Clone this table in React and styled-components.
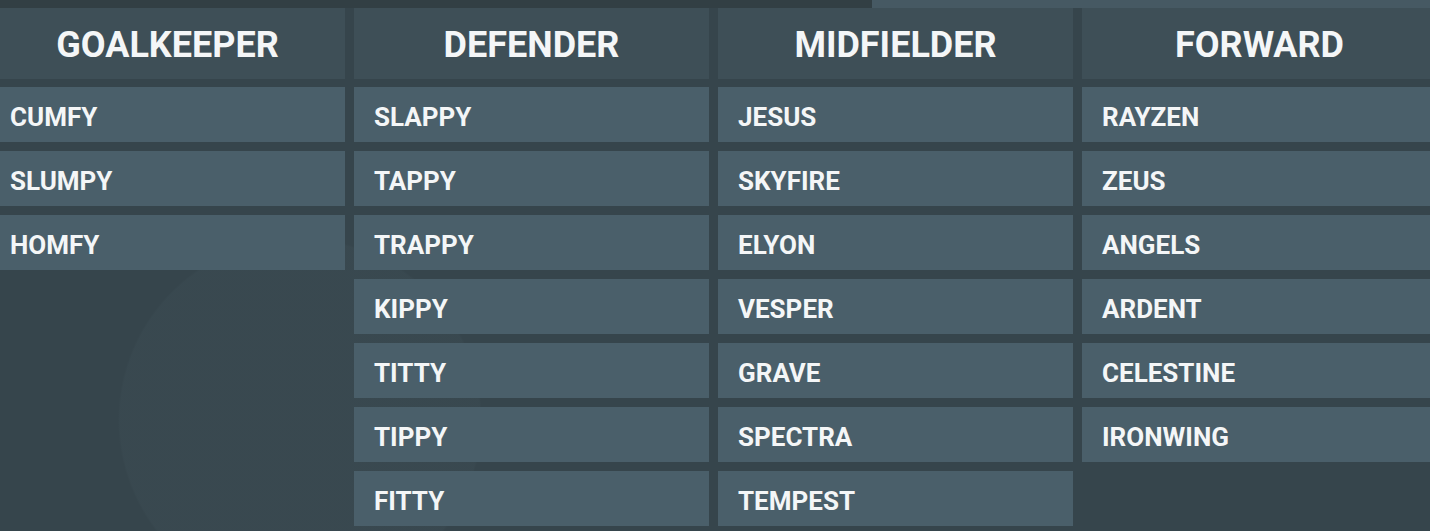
import styled, { createGlobalStyle } from "styled-components";

const GlobalStyle = createGlobalStyle`
  body {
    margin: 0;
    background: #36454c;
    font-family: Roboto, "Liberation Sans", sans-serif;
    overflow: hidden;
  }
`;

const positions = [
  { title: "GOALKEEPER", players: ["CUMFY", "SLUMPY", "HOMFY"] },
  { title: "DEFENDER", players: ["SLAPPY", "TAPPY", "TRAPPY", "KIPPY", "TITTY", "TIPPY", "FITTY"] },
  { title: "MIDFIELDER", players: ["JESUS", "SKYFIRE", "ELYON", "VESPER", "GRAVE", "SPECTRA", "TEMPEST"] },
  { title: "FORWARD", players: ["RAYZEN", "ZEUS", "ANGELS", "ARDENT", "CELESTINE", "IRONWING"] },
];

export default function App() {
  return (
    <Page>
      <GlobalStyle />
      <TopStrip>
        <div className="dark" />
        <div className="light" />
      </TopStrip>
      <Board>
        {positions.map((pos) => (
          <Column key={pos.title}>
            <Header>{pos.title}</Header>
            <PlayerList>
              {pos.players.map((name) => (
                <PlayerRow key={name}>{name}</PlayerRow>
              ))}
            </PlayerList>
          </Column>
        ))}
      </Board>
    </Page>
  );
}

const Page = styled.div`
  width: 1430px;
  height: 531px;
  overflow: hidden;
  background:
    radial-gradient(circle at 300px 420px, rgba(70, 88, 96, 0.18) 0 180px, transparent 182px),
    #36454c;
`;

const TopStrip = styled.div`
  height: 8px;
  display: flex;

  .dark {
    width: 872px;
    background: #323f44;
  }
  .light {
    flex: 1;
    background: #465963;
  }
`;

const Board = styled.div`
  display: flex;
  gap: 9px;
  margin-left: -10px;
`;

const Column = styled.div`
  flex: 0 0 355px;
  display: flex;
  flex-direction: column;
  gap: 8px;
`;

const Header = styled.div`
  height: 71px;
  background: #3e4f57;
  color: #f4f6f7;
  font-size: 36px;
  font-weight: 700;
  display: flex;
  align-items: center;
  justify-content: center;
  padding-top: 2px;
  box-sizing: border-box;
`;

const PlayerList = styled.div`
  display: flex;
  flex-direction: column;
  gap: 9px;
`;

const PlayerRow = styled.div`
  height: 55px;
  background: #4a5f6a;
  color: #f4f6f7;
  font-size: 26px;
  font-weight: 700;
  display: flex;
  align-items: center;
  padding: 4px 0 0 20px;
  box-sizing: border-box;
`;
